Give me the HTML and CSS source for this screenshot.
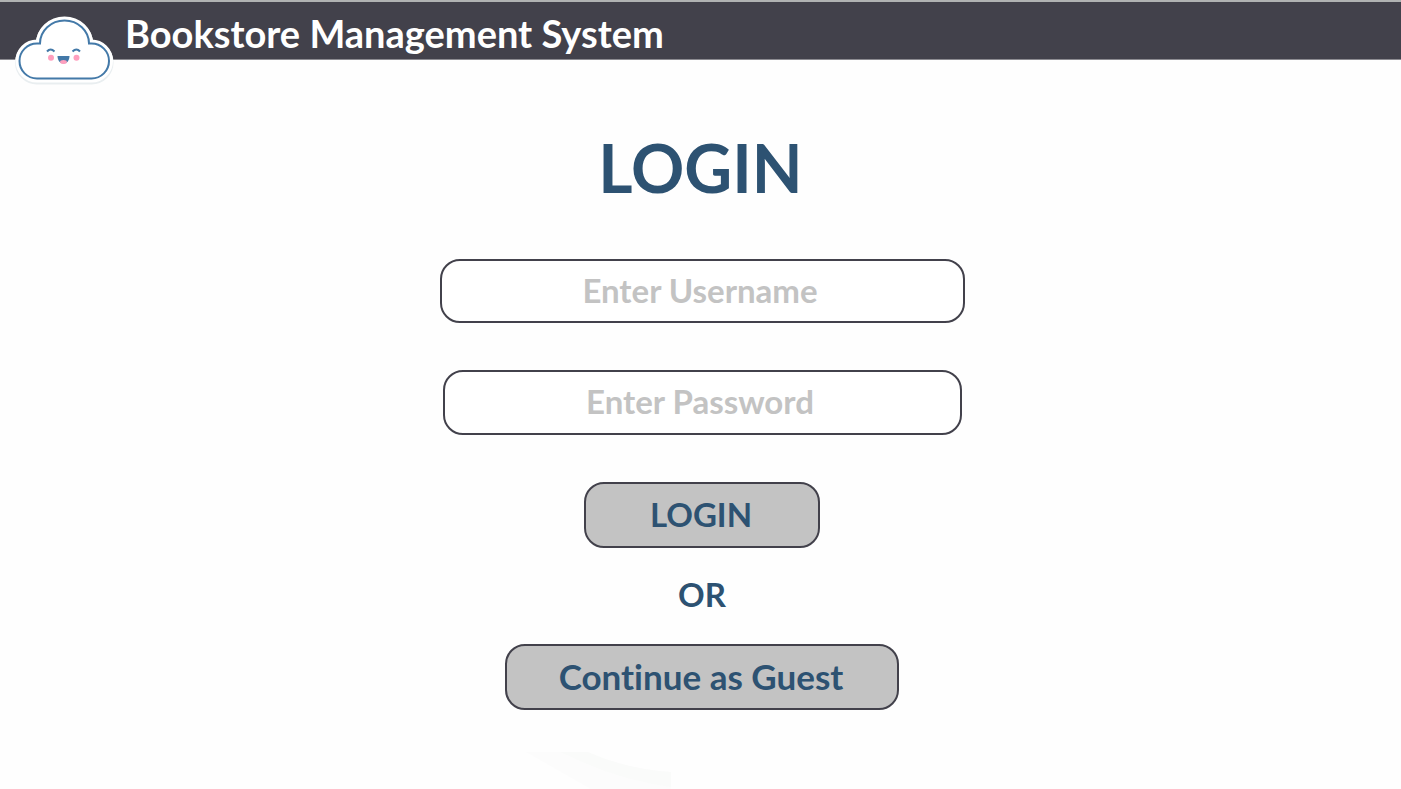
FILE: index.html
```html
<!DOCTYPE html>
<html lang="en">
<head>
  <meta charset="utf-8">
  <meta name="viewport" content="width=device-width, initial-scale=1">
  <title>Bookstore Management System</title>
  <link rel="stylesheet" href="styles.css">
</head>
<body>
  <header class="topbar">
    <svg class="logo" viewBox="14 14 102 74" aria-hidden="true">
      <path class="logo-shade" d="M37 81A17.5 17.5 0 0 1 37 46H40A24.5 23 0 0 1 89 46H91.500A17.500 17.500 0 0 1 91.500 81Z"/>
      <path class="logo-rim" d="M37 79.500A17.500 17.500 0 0 1 37 44.500H40A24.500 23 0 0 1 89 44.500H91.500A17.500 17.500 0 0 1 91.500 79.500Z"/>
      <path class="logo-line" d="M37 79.500A17.500 17.500 0 0 1 37 44.500H40A24.500 23 0 0 1 89 44.500H91.500A17.500 17.500 0 0 1 91.500 79.500Z"/>
      <path class="logo-line" d="M47 52.500Q50.500 48.500 54.500 52.500M72.500 52.500Q76.500 48.500 80 52.500"/>
      <path class="logo-mouth" d="M57.500 57H69.500C69.500 61.500 67 64.500 63.500 64.500S57.500 61.500 57.500 57Z"/>
      <ellipse class="logo-pink" cx="63.500" cy="63" rx="3.400" ry="1.900"/>
      <circle class="logo-pink" cx="51" cy="58.700" r="3"/>
      <circle class="logo-pink" cx="76.500" cy="58.700" r="3"/>
    </svg>
    <p class="brand">Bookstore Management System</p>
  </header>
  <main class="login">
    <h1 class="heading">LOGIN</h1>
    <form class="form">
      <input class="field" type="text" aria-label="Username" placeholder="Enter Username">
      <input class="field field-password" type="password" aria-label="Password" placeholder="Enter Password">
      <button class="button" type="submit">LOGIN</button>
      <p class="divider">OR</p>
      <button class="button button-guest" type="button">Continue as Guest</button>
    </form>
  </main>
  <svg class="swoosh" viewBox="0 0 145 38" aria-hidden="true">
    <path fill="#fcfcfc" d="M0 1H60Q100 18 145 21V38H65Z"/>
    <path fill="#fafbfa" d="M35 1H62Q100 18 145 21V36Q90 29 35 1Z"/>
  </svg>
</body>
</html>
```
FILE: styles.css
```css
* {
  box-sizing: border-box;
}

body {
  position: relative;
  min-height: 100vh;
  margin: 0;
  background: #fefefe;
  color: #2d5272;
  font-family: Lato, "Open Sans", sans-serif;
  font-weight: 700;
  font-variant-ligatures: none;
}

.topbar {
  display: flex;
  align-items: flex-start;
  gap: 9px;
  height: 60px;
  padding: 11px 14px 0;
  border-top: 2px solid #b0b2b2;
  border-bottom: 1px solid #8c8b91;
  background: #42414b;
}

.logo {
  flex: none;
  width: 102px;
  height: 74px;
}

.logo-shade {
  fill: none;
  stroke: #e9eef0;
  stroke-width: 9;
}

.logo-rim {
  fill: #fff;
  stroke: #fff;
  stroke-width: 8;
}

.logo-line {
  fill: none;
  stroke: #4379a8;
  stroke-width: 2;
}

.logo-mouth {
  fill: #4379a8;
}

.logo-pink {
  fill: #ff9fbe;
}

.brand {
  margin: 0;
  color: #fff;
  font-size: 38px;
  line-height: 40px;
}

.login {
  padding: 68px 16px 40px;
}

.heading {
  margin: 0;
  font-size: 66px;
  line-height: 80px;
  text-align: center;
}

.form {
  display: flex;
  flex-direction: column;
  align-items: center;
  margin-top: 51px;
  padding-left: 3px;
}

.field {
  width: 525px;
  max-width: 100%;
  height: 64px;
  margin-bottom: 47px;
  padding: 0 22px 2px 18px;
  border: 2px solid #42414b;
  border-radius: 20px;
  background: #fff;
  color: #2d5272;
  font: inherit;
  font-size: 33px;
  text-align: center;
}

.field-password {
  width: 519px;
  height: 65px;
  padding-bottom: 4px;
}

.button {
  width: 236px;
  max-width: 100%;
  height: 66px;
  padding: 0 2px 2px 0;
  border: 2px solid #42414b;
  border-radius: 20px;
  background: #c3c3c3;
  color: #2d5272;
  font: inherit;
  font-size: 33px;
}

.field::placeholder {
  color: #c3c3c3;
  opacity: 1;
}

.button-guest {
  width: 394px;
  font-size: 35px;
}

.divider {
  margin: 26px 0 30px;
  font-size: 33px;
  line-height: 40px;
}

.swoosh {
  position: absolute;
  bottom: 0;
  left: calc(50% - 175px);
  width: 145px;
  height: 38px;
}
```
